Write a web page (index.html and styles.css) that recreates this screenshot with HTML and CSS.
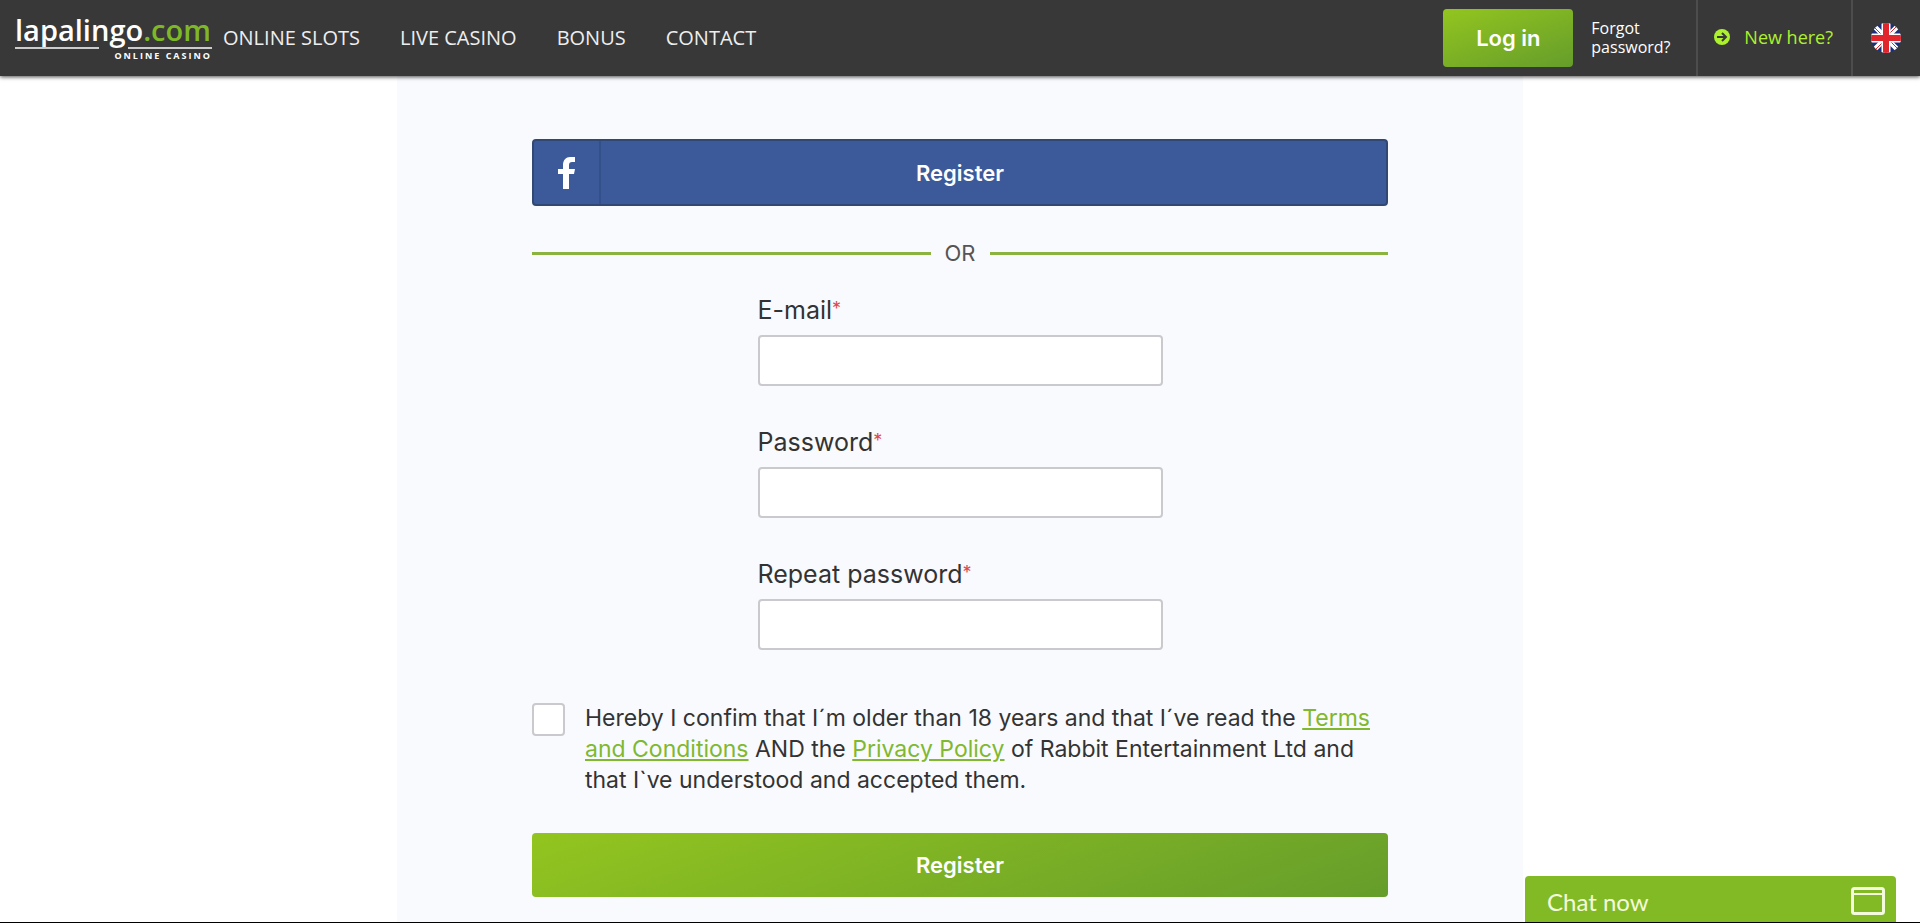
FILE: index.html
```html
<!DOCTYPE html>
<html lang="en">
<head>
    <meta charset="UTF-8">
    <meta name="viewport" content="width=device-width, initial-scale=1.0">
    <title>Register - lapalingo.com</title>
    <link rel="stylesheet" href="styles.css">
</head>
<body>
    <header class="header">
        <a class="logo" href="#">
            <span class="logo_name">lapalingo<span class="logo_com">.com</span></span>
            <span class="logo_lines"><i></i><i></i></span>
            <span class="logo_sub">ONLINE CASINO</span>
        </a>
        <nav class="nav">
            <a href="#">ONLINE SLOTS</a>
            <a href="#">LIVE CASINO</a>
            <a href="#">BONUS</a>
            <a href="#">CONTACT</a>
        </nav>
        <div class="account">
            <button class="btn login" type="button">Log in</button>
            <a class="forgot" href="#">Forgot password?</a>
            <a class="new_here" href="#">
                <svg width="16" height="16" viewBox="0 0 16 16">
                    <circle cx="8" cy="8" r="8" fill="#adf02e"/>
                    <path d="M3 8h9M8 4l4 4-4 4" fill="none" stroke="#383838" stroke-width="2"/>
                </svg>
                New here?
            </a>
            <a class="lang" href="#" aria-label="English">
                <svg width="30" height="30" viewBox="0 0 30 30">
                    <clipPath id="round"><circle cx="15" cy="15" r="15"/></clipPath>
                    <g clip-path="url(#round)">
                        <rect width="30" height="30" fill="#1c2f7c"/>
                        <path d="M0 0l30 30M30 0L0 30" stroke="#fff" stroke-width="5"/>
                        <path d="M0 1l14 14M16 15l14 14M29 0L15 14M15 16L1 30" stroke="#e0252c" stroke-width="1"/>
                        <path d="M15 0v30M0 15h30" stroke="#fff" stroke-width="9"/>
                        <path d="M15 0v30M0 15h30" stroke="#e0252c" stroke-width="6"/>
                    </g>
                </svg>
            </a>
        </div>
    </header>

    <main class="container">
        <form class="register">
            <button class="btn facebook" type="button">
                <span class="facebook_icon">
                    <svg width="17" height="32" viewBox="0 0 17 32">
                        <path d="M5 32V17H0v-5h5V8C5 3 8 0 12 0h5v5h-3c-2 0-3 1-3 3v4h6l-1 5h-5v15z" fill="#fff"/>
                    </svg>
                </span>
                <span class="facebook_text">Register</span>
            </button>

            <div class="or">OR</div>

            <div class="field">
                <label for="email">E-mail<sup>*</sup></label>
                <input type="email" id="email">
            </div>
            <div class="field">
                <label for="password">Password<sup>*</sup></label>
                <input type="password" id="password">
            </div>
            <div class="field">
                <label for="repeat">Repeat password<sup>*</sup></label>
                <input type="password" id="repeat">
            </div>

            <div class="terms">
                <input type="checkbox" id="terms">
                <label for="terms">Hereby I confim that I´m older than 18 years and that I´ve read the <a href="#">Terms<br>and Conditions</a> AND the <a href="#">Privacy Policy</a> of Rabbit Entertainment Ltd and<br>that I`ve understood and accepted them.</label>
            </div>

            <button class="btn submit" type="submit">Register</button>
        </form>
    </main>

    <button class="chat" type="button">
        Chat now
        <svg width="34" height="28" viewBox="0 0 34 28">
            <rect x="1.5" y="1.5" width="31" height="25" rx="2" fill="none" stroke="#f4fbdc" stroke-width="3"/>
            <path d="M2 7h30" stroke="#f4fbdc" stroke-width="2"/>
        </svg>
    </button>
</body>
</html>
```
FILE: styles.css
```css
*{
    box-sizing: border-box;
}

body{
    margin: 0;
    height: 100vh;
    display: flex;
    flex-direction: column;
    overflow: hidden;
    background-color: #fff;
    border-bottom: 1px solid #000;
    font-family: "Inter", sans-serif;
    color: #333;
}

button{
    border: 0;
    cursor: pointer;
}

/* header */

.header{
    position: relative;
    z-index: 1;
    flex: none;
    display: flex;
    align-items: center;
    height: 76px;
    padding-left: 15px;
    background-color: #383838;
    box-shadow: 0 1px 4px rgba(0,0,0,.7);
    font-family: "Open Sans", sans-serif;
}

.header a{
    color: #fff;
    text-decoration: none;
}

.logo{
    width: 197px;
    display: flex;
    flex-direction: column;
    padding-bottom: 2px;
}

.logo_name{
    font-size: 29px;
    font-weight: 600;
    line-height: 35px;
    white-space: nowrap;
}

.logo_com{
    color: #7fb827;
}

.logo_lines{
    display: flex;
    justify-content: space-between;
}

.logo_lines i{
    width: 84px;
    height: 2px;
    background-color: #ccc;
}

.logo_sub{
    text-align: right;
    font-size: 9px;
    font-weight: 700;
    line-height: 14px;
    letter-spacing: 2px;
}

.nav{
    display: flex;
    gap: 40px;
    margin-left: 11px;
    padding-bottom: 2px;
    font-size: 20px;
    white-space: nowrap;
}

.header .nav a{
    color: #eee;
}

.account{
    display: flex;
    align-items: center;
    height: 100%;
    margin-left: auto;
}

.btn{
    border-radius: 4px;
    background: linear-gradient(160deg, #93c51f, #659d2b);
    color: #fff;
    font-family: "Inter", sans-serif;
    font-size: 22px;
    font-weight: 600;
}

.login{
    width: 130px;
    height: 58px;
}

.forgot{
    width: 123px;
    padding: 0 18px;
    font-size: 16px;
    line-height: 19px;
}

.new_here{
    display: flex;
    align-items: center;
    gap: 14px;
    height: 100%;
    padding: 0 18px 2px 16px;
    border-left: 2px solid #4d4d4d;
    border-right: 2px solid #4d4d4d;
    font-size: 18px;
}

.header .new_here{
    color: #adf02e;
}

.lang{
    display: flex;
    padding: 0 19px 0 18px;
}

/* register form */

.container{
    flex: 1;
    width: 100%;
    max-width: 1126px;
    margin: 0 auto;
    padding: 63px 135px 0;
    background-color: #f9fafe;
}

.register{
    display: flex;
    flex-direction: column;
}

.facebook{
    display: flex;
    align-items: center;
    height: 67px;
    padding: 0;
    border: 2px solid #304872;
    background: #3c5a99;
}

.facebook_icon{
    display: flex;
    align-items: center;
    justify-content: center;
    width: 67px;
    height: 100%;
    border-right: 2px solid #34508a;
}

.facebook_text{
    flex: 1;
    padding-right: 67px;
}

.or{
    display: flex;
    align-items: center;
    gap: 14px;
    margin: 31px 0 25px;
    font-size: 22px;
    line-height: 32px;
    color: #555;
}

.or::before,
.or::after{
    content: "";
    flex: 1;
    height: 3px;
    background-color: #8bb340;
}

.field{
    display: flex;
    flex-direction: column;
    align-self: center;
    width: 405px;
    margin-bottom: 40px;
}

.field label{
    margin-bottom: 9px;
    font-size: 25px;
    line-height: 32px;
}

.field sup{
    color: #e0474c;
    font-size: 18px;
    line-height: 0;
    vertical-align: 4px;
}

.field input{
    height: 51px;
    padding: 0 12px;
    border: 2px solid #c9c9ce;
    border-radius: 4px;
    background-color: #fff;
    font-size: 22px;
}

.terms{
    display: flex;
    align-items: flex-start;
    gap: 20px;
    margin: 13px 0 37px;
    font-size: 23px;
    line-height: 31px;
}

.terms input{
    appearance: none;
    flex: none;
    width: 33px;
    height: 33px;
    margin: 0;
    border: 2px solid #c9c9ce;
    border-radius: 4px;
    background-color: #fff;
}

.terms a{
    color: #80b82f;
}

.submit{
    height: 64px;
}

/* chat */

.chat{
    position: fixed;
    right: 24px;
    bottom: 1px;
    display: flex;
    align-items: center;
    justify-content: space-between;
    width: 371px;
    height: 46px;
    padding: 4px 11px 0 22px;
    border-radius: 4px 4px 0 0;
    background-color: #82ba25;
    color: #f4fbdc;
    font-family: "Lato", sans-serif;
    font-size: 24px;
}
```
